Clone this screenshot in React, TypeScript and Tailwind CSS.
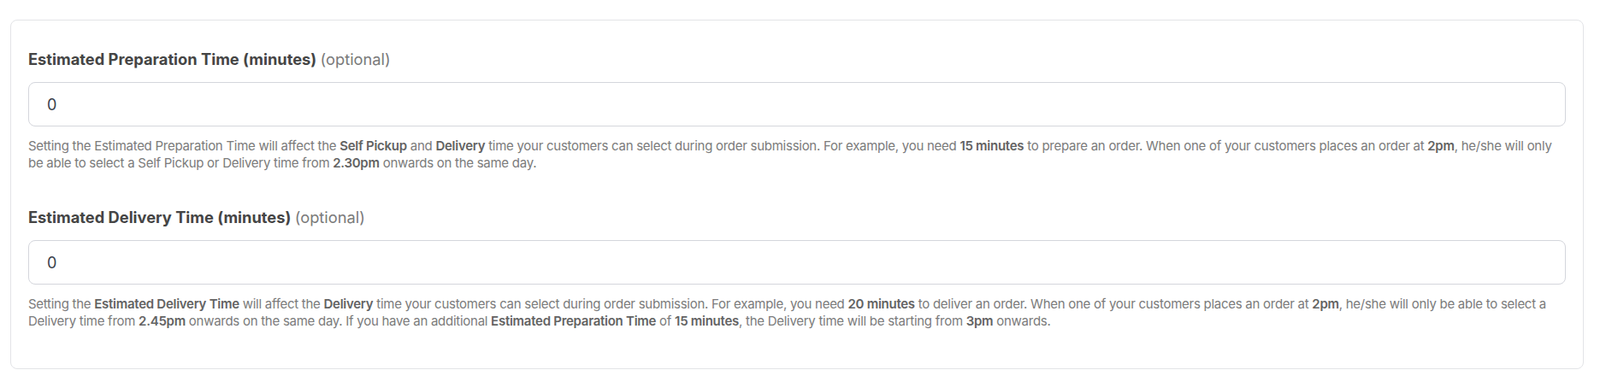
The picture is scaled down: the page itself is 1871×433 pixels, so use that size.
import React from 'react'

function Field({
  label,
  value,
  children,
}: {
  label: string
  value: string
  children: React.ReactNode
}) {
  return (
    <div>
      <label className="block text-[18.3px] leading-[28px] font-bold text-[#454545]">
        {label} <span className="font-normal text-[#7a7a7a]">(optional)</span>
      </label>
      <input
        type="text"
        defaultValue={value}
        className="mt-[13px] block w-full h-[52px] rounded-lg border border-[#d4d6dc] bg-white px-[21px] text-[18px] text-[#3a3f4a] outline-none"
      />
      <p className="mt-[13px] text-[15px] leading-[20px] tracking-[-0.018em] text-[#7b7b7b]">{children}</p>
    </div>
  )
}

export default function App() {
  return (
    <div
      className="min-h-screen bg-white pt-[23px] pl-3 pr-[19px]"
      style={{ fontFamily: 'Inter, "Noto Sans", sans-serif' }}
    >
      <div className="rounded-lg border border-[#e3e4e7] bg-white px-5 pt-[31px] pb-[45px]">
        <div className="space-y-[39px]">
          <Field label="Estimated Preparation Time (minutes)" value="0">
            Setting the Estimated Preparation Time will affect the <b className="font-semibold text-[#636363]">Self Pickup</b> and{' '}
            <b className="font-semibold text-[#636363]">Delivery</b> time your customers can select during order submission. For
            example, you need <b className="font-semibold text-[#636363]">15 minutes</b> to prepare an order. When one of your
            customers places an order at <b className="font-semibold text-[#636363]">2pm</b>, he/she will only be able to select a
            Self Pickup or Delivery time from <b className="font-semibold text-[#636363]">2.30pm</b> onwards on the same day.
          </Field>
          <Field label="Estimated Delivery Time (minutes)" value="0">
            Setting the <b className="font-semibold text-[#636363]">Estimated Delivery Time</b> will affect the{' '}
            <b className="font-semibold text-[#636363]">Delivery</b> time your customers can select during order submission. For
            example, you need <b className="font-semibold text-[#636363]">20 minutes</b> to deliver an order. When one of your
            customers places an order at <b className="font-semibold text-[#636363]">2pm</b>, he/she will only be able to select a
            Delivery time from <b className="font-semibold text-[#636363]">2.45pm</b> onwards on the same day. If you have an
            additional <b className="font-semibold text-[#636363]">Estimated Preparation Time</b> of{' '}
            <b className="font-semibold text-[#636363]">15 minutes</b>, the Delivery time will be starting from{' '}
            <b className="font-semibold text-[#636363]">3pm</b> onwards.
          </Field>
        </div>
      </div>
    </div>
  )
}
